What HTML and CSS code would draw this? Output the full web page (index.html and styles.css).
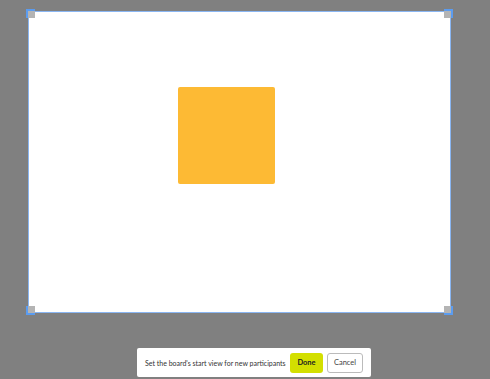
FILE: index.html
```html
<!DOCTYPE html>
<html lang="en">
<head>
    <meta charset="UTF-8">
    <meta name="viewport" content="width=device-width, initial-scale=1.0">
    <title>Board start view</title>
    <link rel="stylesheet" href="styles.css">
</head>
<body>
    <div class="board">
        <div class="frame">
            <span class="handle tl"></span>
            <span class="handle tr"></span>
            <span class="handle bl"></span>
            <span class="handle br"></span>
            <div class="sticky"></div>
        </div>

        <div class="toolbar">
            <span class="hint">Set the board's start view for new participants</span>
            <button class="btn done">Done</button>
            <button class="btn cancel">Cancel</button>
        </div>
    </div>
</body>
</html>
```

FILE: styles.css
```css
body {
    margin: 0;
    padding: 0;
    background-color: #808080;
    font-family: Lato, "Open Sans", Arial, sans-serif;
}

.board {
    padding: 11px 0 0 28px;
}

/* the selected start view area */
.frame {
    position: relative;
    box-sizing: border-box;
    width: 423px;
    height: 302px;
    padding: 75px 0 0 149px;
    background: #fff;
    border: 1px solid #8ab6f2;
}

.sticky {
    width: 97px;
    height: 97px;
    background: #fdba34;
    border-radius: 2px;
}

.handle {
    position: absolute;
    width: 9px;
    height: 9px;
    background: #b4b4b4;
}

.handle::after {
    content: "";
    position: absolute;
    width: 7px;
    height: 7px;
    border-color: #5b9cf0;
    border-style: solid;
    border-width: 0;
}

.handle.tl { top: -3px; left: -3px; }
.handle.tr { top: -3px; right: -3px; }
.handle.bl { bottom: -3px; left: -3px; }
.handle.br { bottom: -3px; right: -3px; }

.handle.tl::after { right: 0; bottom: 0; border-top-width: 2px; border-left-width: 2px; }
.handle.tr::after { left: 0; bottom: 0; border-top-width: 2px; border-right-width: 2px; }
.handle.bl::after { right: 0; top: 0; border-bottom-width: 2px; border-left-width: 2px; }
.handle.br::after { left: 0; top: 0; border-bottom-width: 2px; border-right-width: 2px; }

.toolbar {
    display: flex;
    align-items: center;
    box-sizing: border-box;
    width: 234px;
    height: 29px;
    margin: 35px 0 0 109px;
    padding: 0 8px;
    background: #fff;
    border-radius: 2px;
}

.hint {
    flex: 1;
    min-width: 0;
    font-size: 7px;
    color: #333;
    white-space: nowrap;
}

.btn {
    flex-shrink: 0;
    box-sizing: border-box;
    height: 20px;
    padding: 0;
    font-family: inherit;
    font-size: 7.5px;
    border-radius: 3px;
    cursor: pointer;
}

.done {
    width: 33px;
    background: #d3df00;
    border: none;
    font-weight: 700;
    color: #222;
}

.cancel {
    width: 36px;
    margin-left: 4px;
    background: #fff;
    border: 1px solid #bbb;
    color: #444;
}
```
